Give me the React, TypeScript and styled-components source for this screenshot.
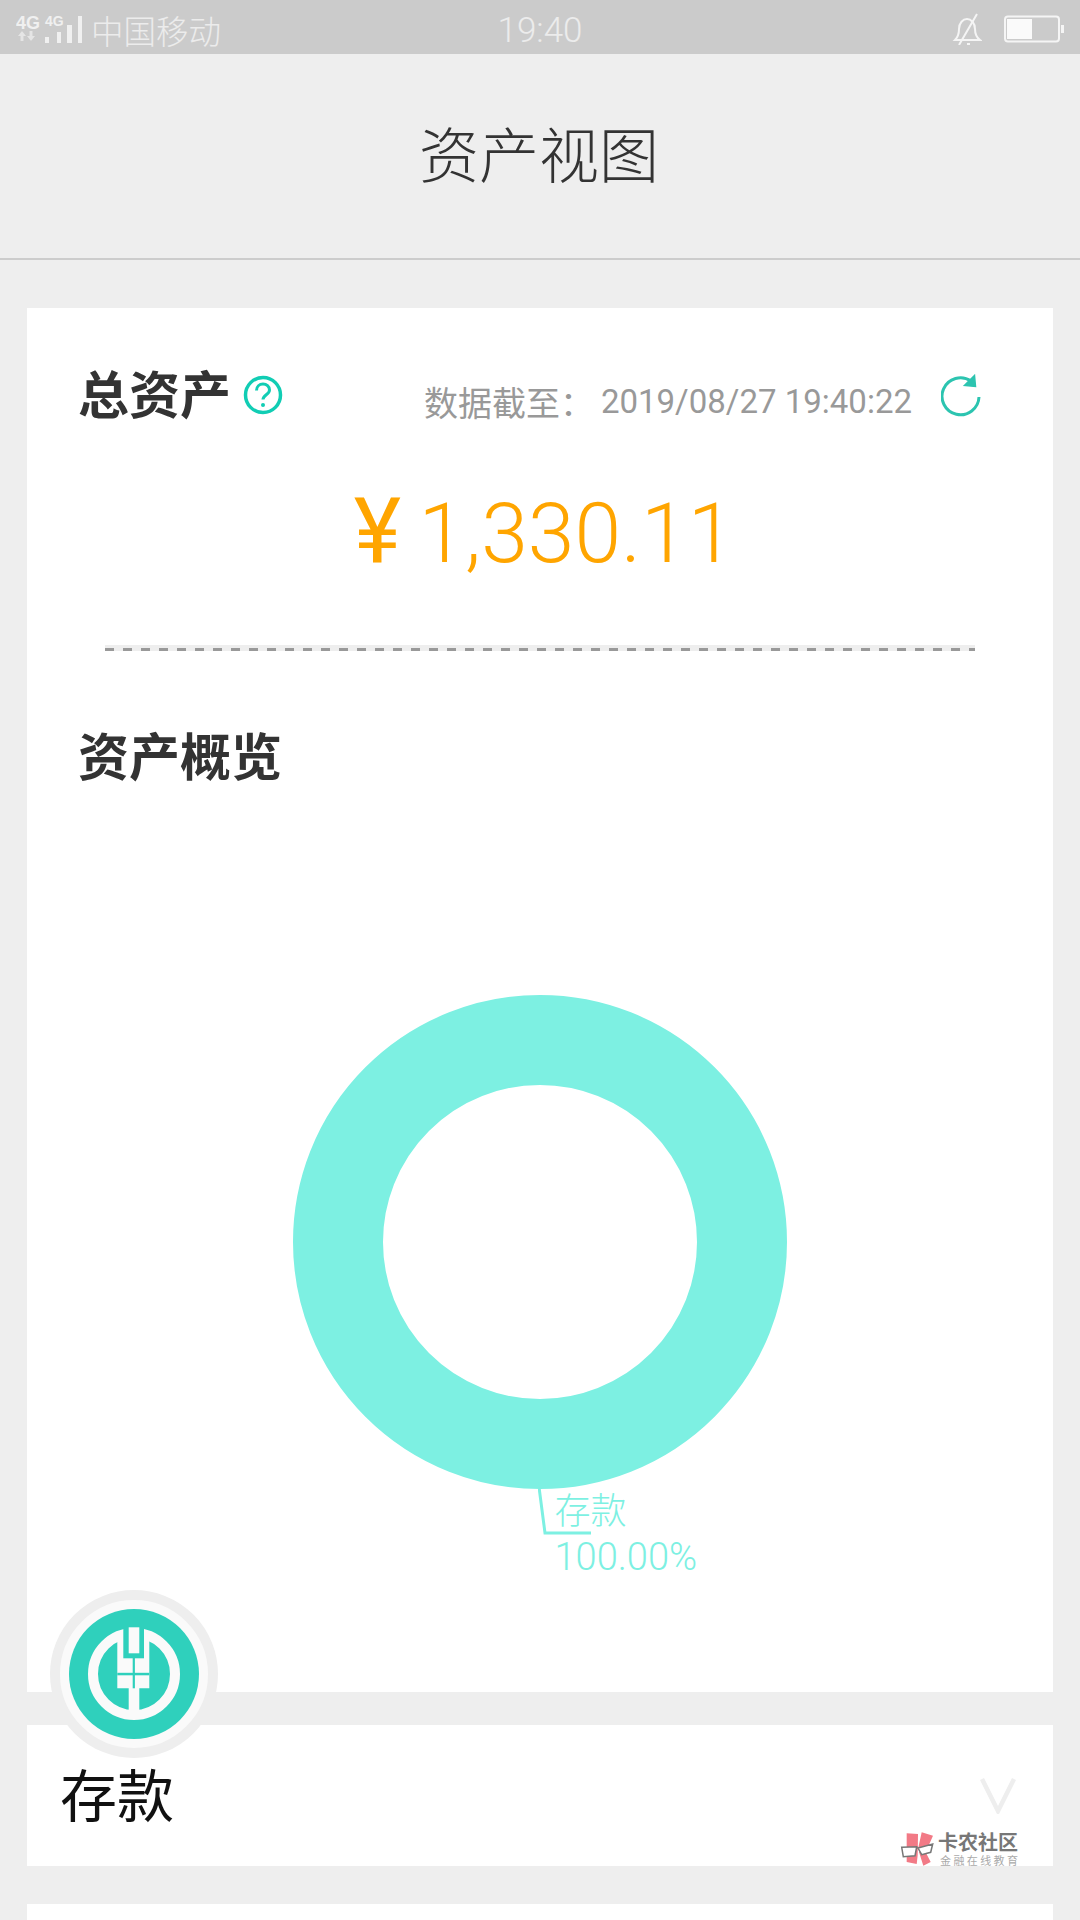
import React from 'react';
import styled, { createGlobalStyle } from 'styled-components';

const Global = createGlobalStyle`
  html, body { margin: 0; padding: 0; background: #eeeeee; }
  body { font-family: Roboto, "Noto Sans CJK SC", sans-serif; }
`;
const CJK = `Roboto, "Noto Sans CJK SC", sans-serif`;

const Page = styled.div`
  position: relative; width: 1080px; height: 1920px; overflow: hidden; background: #eeeeee;
`;
const StatusBar = styled.div`
  height: 54px; background: #cbcbcb; display: grid; grid-template-columns: 1fr auto 1fr;
  align-items: center; padding: 0 16px; box-sizing: border-box; color: #f2f2f2;
`;
const StatusLeft = styled.div`display: flex; align-items: center; gap: 7px;`;
const Carrier = styled.span`font: 300 32.5px ${CJK}; color: #ececec;`;
const Clock = styled.span`font: 300 35px/54px ${CJK}; color: #ececec; padding-top: 4px;`;
const StatusRight = styled.div`display: flex; justify-content: flex-end; align-items: center; gap: 22px;`;
const Header = styled.header`
  height: 206px; box-sizing: border-box; border-bottom: 2px solid #cccccc; display: flex;
  align-items: center; justify-content: center;
`;
const Title = styled.h1`margin: 0 2px 10px 0; font: 300 60px ${CJK}; color: #333333;`;
const Card = styled.section`
  margin: 48px 27px 0; height: 1384px; background: #fff; box-sizing: border-box; padding: 54px 53px 0 51px;
  display: flex; flex-direction: column;
`;
const TotalRow = styled.div`display: flex; align-items: center; height: 70px;`;
const Heading = styled.h2`margin: 0; font: 700 51px/70px ${CJK}; color: #333333;`;
const Help = styled.svg`margin: 0 0 4px 12px;`;
const Stamp = styled.div`
  margin-left: auto; margin-right: 19px; display: flex; align-items: center; font: 400 33px ${CJK}; color: #999999; margin-top: 9px;
`;
const StampLabel = styled.span`margin-right: 7px; font-size: 34px;`;
const Refresh = styled.svg`margin: -12px 0 0 29px;`;
const Amount = styled.div`
  margin-top: 52px; text-align: center; font: 300 84px/100px ${CJK}; color: #ffa500; padding-left: 10px; word-spacing: -3px;
`;
const Currency = styled.span`font-size: 90px; line-height: 0; font-weight: 400;`;
const Dash = styled.div`
  margin: 61px 25px 0 27px; height: 6px; background: repeating-linear-gradient(90deg, #999 0 9px, transparent 9px 18px) bottom/100% 3px no-repeat, #eeeeee;
`;
const Overview = styled.h2`margin: 73px 0 0; font: 700 51px/70px ${CJK}; color: #333333;`;
const ChartArea = styled.div`
  position: relative; margin-top: 201px; margin-left: 1px; align-self: center; width: 494px; height: 494px;
`;
const Donut = styled.div`
  width: 494px; height: 494px; border-radius: 50%; box-sizing: border-box; border: 90px solid #7df0e2;
`;
const Leader = styled.svg`position: absolute; left: 245px; top: 492px;`;
const LabelName = styled.span`position: absolute; left: 262px; top: 492px; font: 300 36px/50px ${CJK}; color: #7df0e2;`;
const LabelValue = styled.span`position: absolute; left: 262px; top: 537px; font: 300 38px/50px ${CJK}; color: #7df0e2;`;
const Row = styled.section`
  margin: 33px 27px 0; height: 141px; background: #fff; box-sizing: border-box; padding: 0 35px 0 33px;
  display: flex; align-items: center; justify-content: space-between;
`;
const RowTitle = styled.span`font: 400 57px/70px ${CJK}; color: #111111; margin-top: 5px;`;
const Chevron = styled.svg`margin: 0 2px 0 0;`;
const NextRow = styled.section`margin: 38px 27px 0; height: 100px; background: #fff;`;
const BankBadge = styled.div`
  position: absolute; left: 50px; top: 1590px; width: 168px; height: 168px; border-radius: 50%;
  box-sizing: border-box; border: 10px solid #eeeeee; background: #fafafa;
  display: flex; align-items: center; justify-content: center;
`;
const Watermark = styled.div`
  position: absolute; left: 900px; top: 1832px; display: flex; align-items: flex-start; gap: 4px;
`;
const WmText = styled.div`display: flex; flex-direction: column; padding-top: 1px;`;
const WmMain = styled.span`font: 700 20px/20px ${CJK}; color: #777777;`;
const WmSub = styled.span`font: 400 11px/14px ${CJK}; color: #aaaaaa; letter-spacing: 2.4px; margin-left: 2px; margin-top: 2px;`;

export default function App() {
  return (
    <Page>
      <Global />
      <StatusBar>
        <StatusLeft>
          <svg width="68" height="32" viewBox="0 0 68 32" fill="#f0f0f0">
            <text x="0" y="16" fontFamily="Liberation Sans" fontWeight="700" fontSize="18">4G</text>
            <text x="29" y="13" fontFamily="Liberation Sans" fontWeight="700" fontSize="14">4G</text>
            <path d="M6 18l4 5H7.500v5h-3v-5H2zM15 28l4-5h-2.500v-5h-3v5H11z" opacity=".7" />
            <rect x="29" y="24" width="4" height="6" />
            <rect x="41" y="19" width="4" height="11" />
            <rect x="51" y="12" width="5" height="18" />
            <rect x="62" y="3" width="4" height="27" />
          </svg>
          <Carrier>中国移动</Carrier>
        </StatusLeft>
        <Clock>19:40</Clock>
        <StatusRight>
          <svg width="30" height="32" viewBox="0 0 30 32" fill="none" stroke="#f5f5f5" strokeWidth="2">
            <path d="M3 27c3-3 4-6 4-11 0-6 4-10 8-10s8 4 8 10c0 5 1 8 5 11z" />
            <path d="M25 1L7 32M15 31h3" />
          </svg>
          <svg width="60" height="28" viewBox="0 0 60 28">
            <rect x="1" y="1.500" width="54" height="25" rx="3" fill="none" stroke="#f5f5f5" strokeWidth="2" />
            <rect x="3" y="4" width="25" height="20" fill="#fafafa" />
            <rect x="57" y="10" width="3" height="8" fill="#f5f5f5" />
          </svg>
        </StatusRight>
      </StatusBar>
      <Header><Title>资产视图</Title></Header>
      <Card>
        <TotalRow>
          <Heading>总资产</Heading>
          <Help width="40" height="42" viewBox="0 0 40 42" fill="none" stroke="#11cdb4" strokeWidth="3.5">
            <circle cx="20" cy="21" r="17.5" />
            <path d="M13.500 16.500c0-4 3-6.500 6.500-6.500s6.500 2.500 6.500 6c0 4.500-6.500 5-6.500 9.500" strokeWidth="3" />
            <circle cx="20" cy="31" r="2" fill="#11cdb4" stroke="none" />
          </Help>
          <Stamp>
            <StampLabel>数据截至：</StampLabel>2019/08/27 19:40:22
            <Refresh width="40" height="44" viewBox="0 0 40 44" fill="none" stroke="#2cc4b0" strokeWidth="3">
              <path d="M38 23A18.500 18.500 0 1 1 30 7" />
              <path d="M33.500 1.500l1 11-11-1z" strokeWidth="1.500" fill="#2cc4b0" />
            </Refresh>
          </Stamp>
        </TotalRow>
        <Amount><Currency>¥</Currency> 1,330.11</Amount>
        <Dash />
        <Overview>资产概览</Overview>
        <ChartArea>
          <Donut />
          <Leader width="56" height="50" viewBox="0 0 56 50" fill="none" stroke="#7df0e2" strokeWidth="3">
            <path d="M1 0l6 46h46" />
          </Leader>
          <LabelName>存款</LabelName>
          <LabelValue>100.00%</LabelValue>
        </ChartArea>
      </Card>
      <Row>
        <RowTitle>存款</RowTitle>
        <Chevron width="36" height="36" viewBox="0 0 36 36" fill="none" stroke="#eeeeee" strokeWidth="4.5">
          <path d="M2 1l16 32L34 1" />
        </Chevron>
      </Row>
      <NextRow />
      <BankBadge>
        <svg width="130" height="130" viewBox="0 0 130 130">
          <circle cx="65" cy="65" r="65" fill="#2fd0bc" />
          <circle cx="65" cy="65" r="41" fill="none" stroke="#fafafa" strokeWidth="10" />
          <path d="M48.300 24h32v55.300H70.300V108H59.700V79.300H48.300z" fill="#fafafa" />
          <rect x="54.300" y="17" width="20.700" height="32.300" fill="#2fd0bc" />
          <rect x="59.700" y="18.300" width="10.600" height="26" fill="#fafafa" />
          <rect x="48.300" y="63.800" width="32" height="2.500" fill="#2fd0bc" />
          <rect x="63.700" y="49" width="2.200" height="30.300" fill="#2fd0bc" />
        </svg>
      </BankBadge>
      <Watermark>
        <svg width="34" height="34" viewBox="0 0 34 34">
          <path d="M6.700 1.300L18 2l-.3 21-1 9-10-2z" fill="#f27a86" />
          <path d="M21.700.3L33 3.700 28 15l-10 2zM19 20l6-1 5.700 11-7.400 3.700z" fill="#f27a86" />
          <path d="M1.700 15.300l15-.6L15 23.700l-11.700 1zM18 16l14.700-4-2 8.300-9 2.400z" fill="#fff" stroke="#777" strokeWidth="1.500" />
        </svg>
        <WmText>
          <WmMain>卡农社区</WmMain>
          <WmSub>金融在线教育</WmSub>
        </WmText>
      </Watermark>
    </Page>
  );
}
